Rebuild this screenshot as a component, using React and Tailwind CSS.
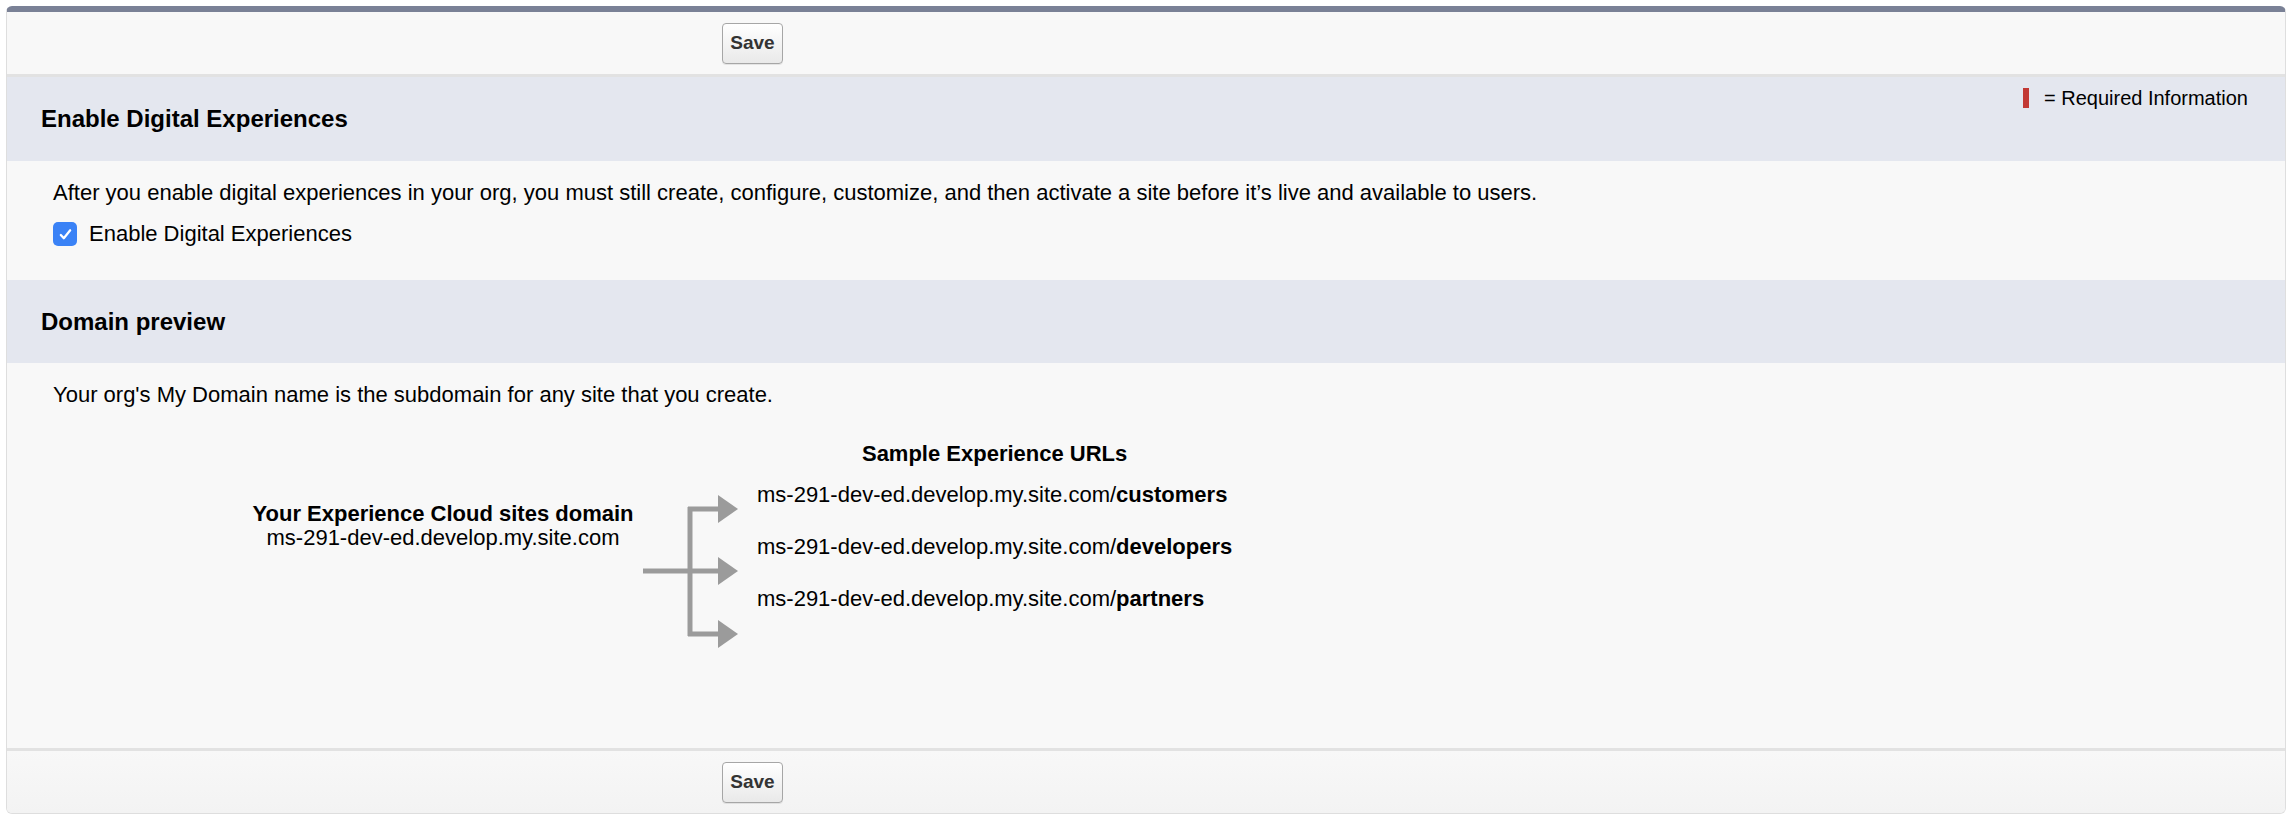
function SaveButton() {
  return (
    <button className="h-[41px] w-[61px] rounded-[4px] border border-[#a6a6a6] bg-gradient-to-b from-white to-[#e9e9e9] text-[19px] font-bold text-[#333] shadow-[0_1px_0_rgba(0,0,0,0.08)]">
      Save
    </button>
  );
}

function Arrows() {
  return (
    <svg width="97" height="155" viewBox="0 0 97 155" className="shrink-0">
      <g stroke="#9b9b9b" strokeWidth="5" fill="none">
        <line x1="0" y1="76" x2="77" y2="76" />
        <line x1="47" y1="12" x2="47" y2="141" />
        <line x1="45" y1="14" x2="77" y2="14" />
        <line x1="45" y1="139" x2="77" y2="139" />
      </g>
      <g fill="#9b9b9b">
        <polygon points="75,0 95,14 75,28" />
        <polygon points="75,62 95,76 75,90" />
        <polygon points="75,125 95,139 75,153" />
      </g>
    </svg>
  );
}

function App() {
  const base = "ms-291-dev-ed.develop.my.site.com";

  return (
    <div className="min-h-screen bg-white px-[6px] pt-[6px] font-['Liberation_Sans',Arial,sans-serif] text-black">
      <div className="overflow-hidden rounded-[6px] border-x border-b border-t-[6px] border-x-[#dedede] border-b-[#dedede] border-t-[#7a8196] bg-[#f8f8f8]">
        {/* top buttons */}
        <div className="flex h-[65px] items-center border-b-[3px] border-[#e2e2e2] pl-[715px]">
          <SaveButton />
        </div>

        {/* section 1 */}
        <div className="flex h-[84px] items-center justify-between bg-[#e4e7ef]">
          <h2 className="pl-[34px] text-[24px] leading-[28px] font-bold">Enable Digital Experiences</h2>
          <div className="flex items-center gap-[15px] self-start pr-[37px] pt-[10px] text-[20px] leading-[22px]">
            <span className="h-[20px] w-[6px] bg-[#c23934]" />
            <span>= Required Information</span>
          </div>
        </div>
        <div className="h-[119px] pl-[46px] pt-[19px] text-[22px] leading-[26px]">
          <p>
            After you enable digital experiences in your org, you must still create, configure, customize, and then activate a site before it’s live and available to users.
          </p>
          <label className="mt-[15px] flex items-center gap-[12px]">
            <span className="flex h-[24px] w-[24px] items-center justify-center rounded-[5px] bg-[#3a82f6]">
              <svg width="15" height="15" viewBox="0 0 16 16">
                <path d="M3 8.5l3.2 3.5L13 3.5" stroke="white" strokeWidth="2.4" fill="none" strokeLinecap="round" strokeLinejoin="round" />
              </svg>
            </span>
            <span>Enable Digital Experiences</span>
          </label>
        </div>

        {/* section 2 */}
        <div className="flex h-[83px] items-center bg-[#e4e7ef] pl-[34px]">
          <h2 className="text-[24px] leading-[28px] font-bold">Domain preview</h2>
        </div>
        <div className="h-[385px] pl-[46px] pt-[19px] text-[22px] leading-[26px]">
          <p>Your org's My Domain name is the subdomain for any site that you create.</p>
          <div className="mt-[33px] flex items-start">
            <div className="ml-[190px] mt-[61px] w-[400px] text-center leading-[24px]">
              <div className="font-bold">Your Experience Cloud sites domain</div>
              <div>{base}</div>
            </div>
            <div className="mt-[54px]">
              <Arrows />
            </div>
            <div className="ml-[17px] flex flex-col">
              <div className="text-center font-bold">Sample Experience URLs</div>
              <div className="mt-[15px] flex flex-col gap-[26px]">
                <div>
                  {base}/<b>customers</b>
                </div>
                <div>
                  {base}/<b>developers</b>
                </div>
                <div>
                  {base}/<b>partners</b>
                </div>
              </div>
            </div>
          </div>
        </div>

        {/* bottom buttons */}
        <div className="flex h-[65px] items-center border-t-[3px] border-[#e2e2e2] bg-gradient-to-b from-[#f8f8f8] to-[#f3f3f3] pl-[715px]">
          <SaveButton />
        </div>
      </div>
    </div>
  );
}

export default App;
